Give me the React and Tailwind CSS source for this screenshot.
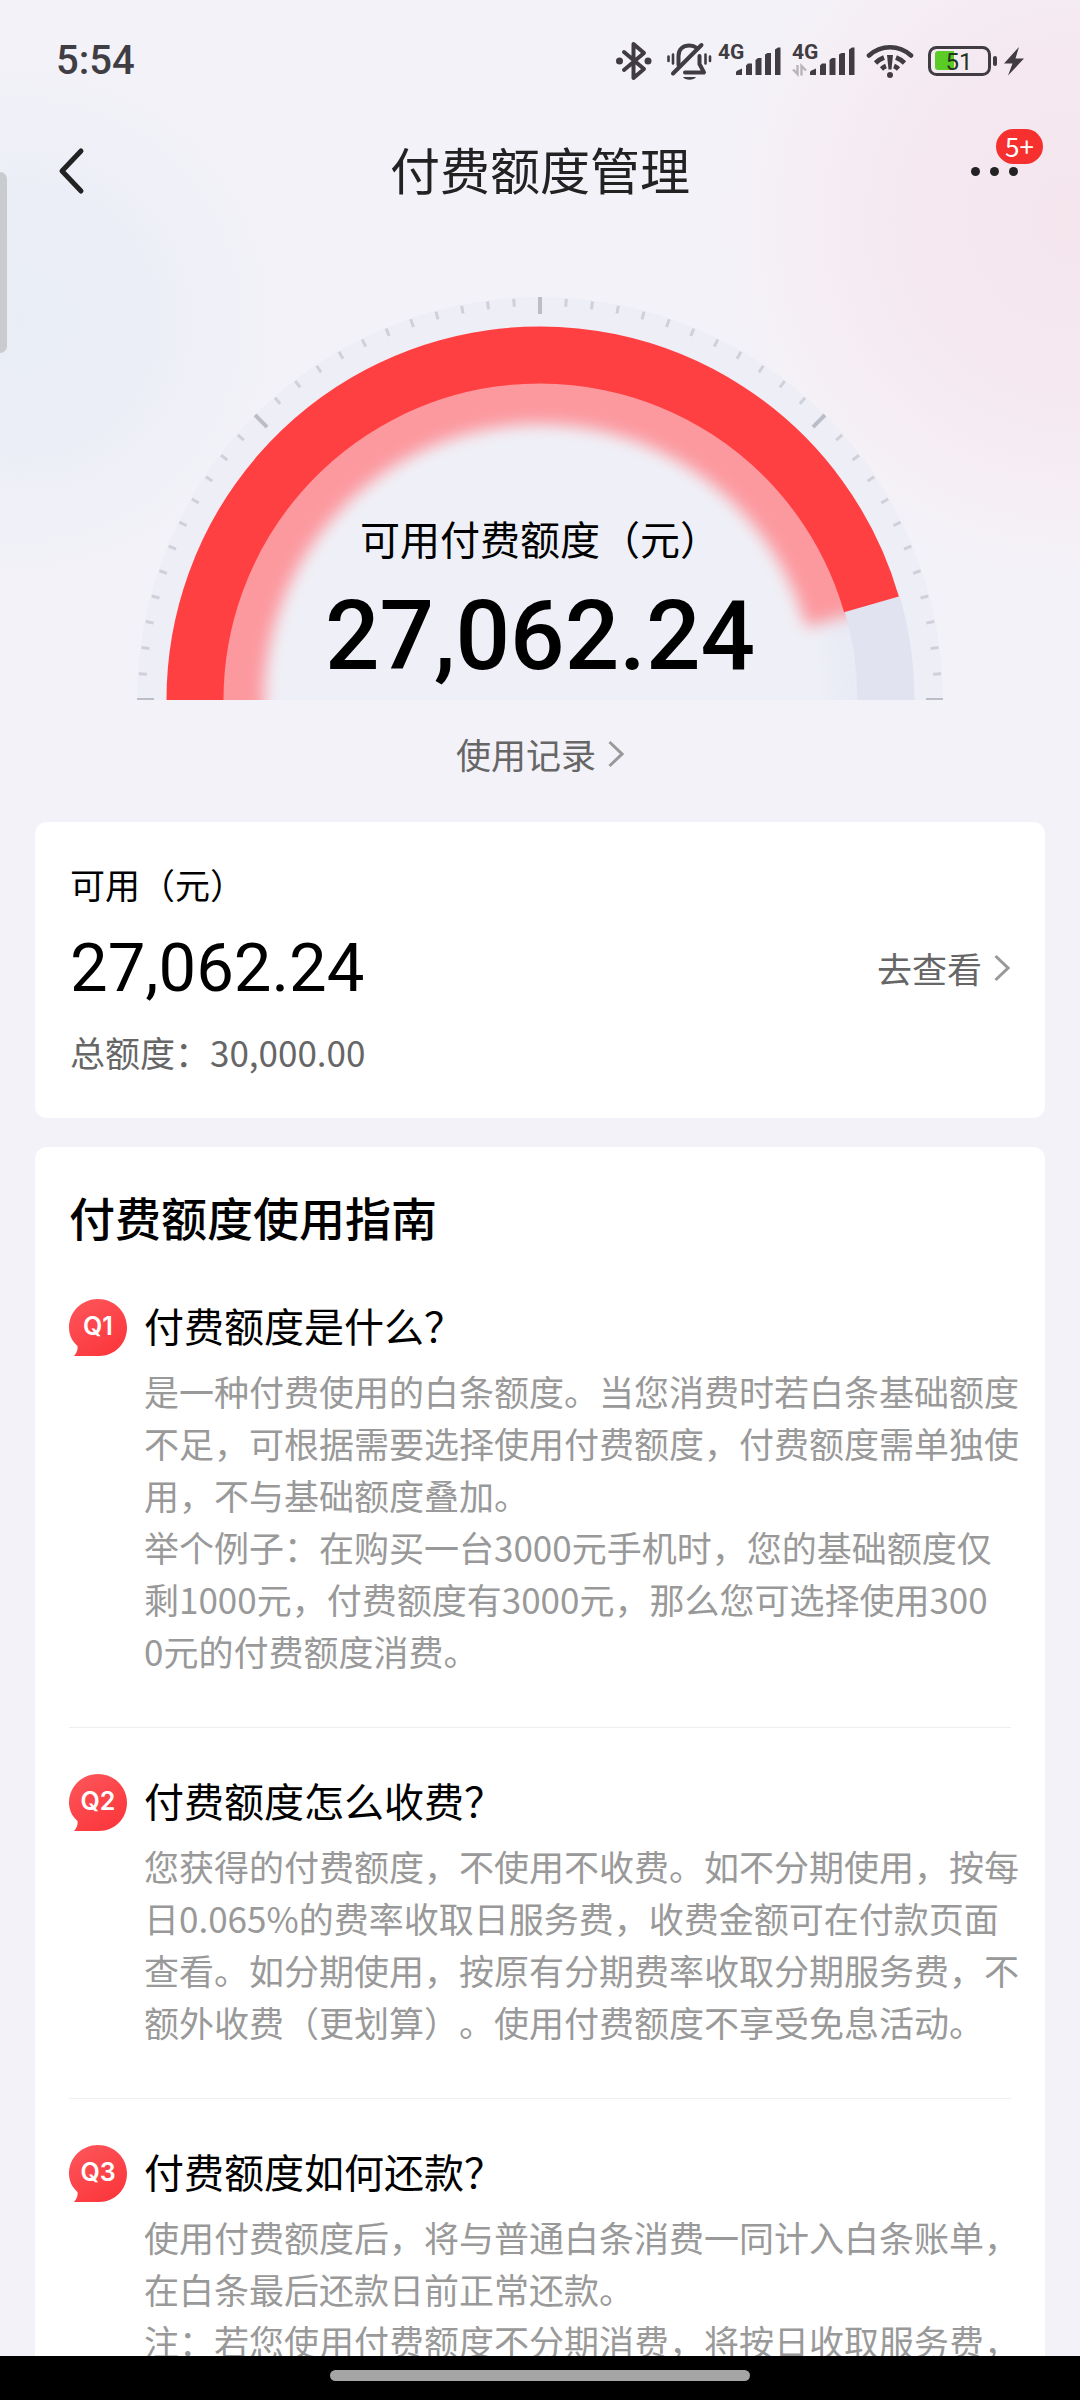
const RED = '#ff4043';
const CX = 403;
const CY = 403;

const polar = (r, deg) => {
  const a = (deg * Math.PI) / 180;
  return [CX - r * Math.cos(a), CY - r * Math.sin(a)];
};

const arc = (r, from, to) => {
  const [x1, y1] = polar(r, from);
  const [x2, y2] = polar(r, to);
  return `M${x1} ${y1}A${r} ${r} 0 0 1 ${x2} ${y2}`;
};

const ticks = Array.from({ length: 49 }, (_, i) => {
  const major = i % 12 === 0;
  const deg = i * 3.75;
  return { major, from: polar(major ? 386 : 394, deg), to: polar(major ? 403 : 402, deg) };
});

function Gauge() {
  return (
    <svg viewBox="0 0 806 403" className="block w-full" aria-hidden="true">
      <defs>
        <filter id="soft" filterUnits="userSpaceOnUse" x="-40" y="-40" width="886" height="560">
          <feGaussianBlur stdDeviation="8" />
        </filter>
        <filter id="softer" filterUnits="userSpaceOnUse" x="-40" y="-40" width="886" height="600">
          <feGaussianBlur stdDeviation="14" />
        </filter>
        <clipPath id="dial">
          <circle cx={CX} cy={CY} r="318" />
        </clipPath>
      </defs>
      <circle cx={CX} cy={CY} r="403" fill="#eeeef7" />
      <circle cx={CX} cy={CY} r="318" fill="#eff0f7" />
      <g clipPath="url(#dial)" fill="none">
        <path d={arc(318, 160, 190)} stroke="#e8eaf5" strokeWidth="50" filter="url(#softer)" />
        <path d={arc(315, -10, 164.6)} stroke="#fc999f" strokeWidth="78" filter="url(#soft)" />
      </g>
      <path d={arc(346, 163, 180)} fill="none" stroke="#e1e3f1" strokeWidth="57" />
      <path d={arc(345, 0, 163.9)} fill="none" stroke={RED} strokeWidth="57" />
      {ticks.map((t, i) => (
        <line
          key={i}
          x1={t.from[0]}
          y1={t.from[1]}
          x2={t.to[0]}
          y2={t.to[1]}
          stroke={t.major ? '#bdbdc8' : '#d0d0da'}
          strokeWidth={t.major ? 4 : 3}
        />
      ))}
    </svg>
  );
}

function Bluetooth() {
  return (
    <svg viewBox="0 0 36 40" className="h-10 w-9" fill="none" stroke="#403c42" strokeWidth="4" strokeLinejoin="round" strokeLinecap="round">
      <path d="M8 11L28 28L17.500 37V3L28 12L8 29" />
      <circle cx="3.500" cy="20" r="3.500" fill="#403c42" stroke="none" />
      <circle cx="32" cy="20" r="3.500" fill="#403c42" stroke="none" />
    </svg>
  );
}

function MutedBell() {
  return (
    <svg viewBox="0 0 46 40" className="h-10 w-[46px]" fill="none" stroke="#403c42" strokeWidth="4" strokeLinecap="round">
      <path d="M12.500 24V15C12.500 8 17 4.500 23.500 4.500C26.500 4.500 29 5.500 31 7" />
      <path d="M33.500 15V23L38 31.500H19" strokeLinejoin="round" />
      <path d="M35.500 4L7 32.500" />
      <path d="M17 36H30C28 39.500 19 39.500 17 36Z" fill="#403c42" stroke="none" />
      <path d="M7 13.500V22.500M2.500 15.500V20M39.500 13.500V22.500M44 15.500V20" strokeWidth="2.600" />
    </svg>
  );
}

function Signal({ data }) {
  return (
    <svg viewBox="0 0 64 40" className="h-10 w-16" fill="#403c42">
      <text x="0" y="18" fontSize="21" fontWeight="700" fontFamily="Roboto, sans-serif">4G</text>
      <path d="M18 34V31.500Q18 30 19.500 29.500L24 27.500V34ZM28 34V24.500L30 22.500H34V34ZM37.500 34V19L40 17H43.500V34ZM47 34V13.500L49.500 12H53V34ZM57 34V8.500L60 6.500H62.500V34Z" />
      {data && (
        <path d="M5.500 24V33L1 28.500M9.500 34.500V25L14 29.500" fill="none" stroke="#b9b3ba" strokeWidth="2.400" />
      )}
    </svg>
  );
}

function Wifi() {
  return (
    <svg viewBox="0 0 48 40" className="h-10 w-12" fill="none" stroke="#403c42" strokeWidth="4.600">
      <path d="M3 14.500C15 3.500 33 3.500 45 14.500" strokeLinecap="round" />
      <path d="M9.500 22Q13 18.500 18 16.500M30 16.500Q35 18.500 38.500 22" />
      <path d="M15.500 28Q17.500 26 20 25M28 25Q30.500 26 32.500 28" />
      <path d="M21 14H27L25.500 28.500H22.500Z" fill="#403c42" stroke="none" />
      <circle cx="24" cy="34" r="3" fill="#403c42" stroke="none" />
    </svg>
  );
}

function Battery() {
  return (
    <svg viewBox="0 0 70 40" className="h-10 w-[70px]">
      <rect x="1.500" y="6.500" width="60" height="27" rx="7" fill="none" stroke="#403c42" strokeWidth="3" />
      <path d="M10 10H26V29H10Q7 29 7 26V13Q7 10 10 10Z" fill="#5bcb25" />
      <rect x="65" y="15" width="4" height="10" rx="2" fill="#403c42" />
      <text x="31" y="29" textAnchor="middle" fontSize="24" fontFamily="Roboto, sans-serif" fontWeight="400" fill="#24351f">51</text>
    </svg>
  );
}

function Bolt() {
  return (
    <svg viewBox="0 0 22 40" className="h-10 w-[22px]" fill="#403c42">
      <path d="M16 6L1 22.500H9.500L5 34.500L21 17.500H12.500Z" />
    </svg>
  );
}

function Chevron() {
  return (
    <svg viewBox="0 0 16 28" className="h-7 w-4 shrink-0" fill="none" stroke="#999" strokeWidth="3" aria-hidden="true">
      <path d="M1.500 2L14 14L1.500 26" />
    </svg>
  );
}

function QBadge({ label }) {
  return (
    <span className="relative mt-0.5 flex h-[57px] w-[58px] shrink-0 items-center justify-center">
      <svg viewBox="0 0 58 57" className="absolute inset-0" aria-hidden="true">
        <defs>
          <linearGradient id={label} x1="0.200" y1="0" x2="0.800" y2="1">
            <stop offset="0" stopColor="#fd5459" />
            <stop offset="1" stopColor="#fb363b" />
          </linearGradient>
        </defs>
        <path d="M29 0C45 0 58 12.500 58 28.500S46 57 30 57H5C8 54 9 50 8.500 47C3 42 0 36 0 28.500C0 12.500 13 0 29 0Z" fill={`url(#${label})`} />
      </svg>
      <span className="relative pb-1 font-[Inter] text-[25px] leading-7 font-semibold text-white">{label}</span>
    </span>
  );
}

const guide = [
  {
    id: 'Q1',
    title: '付费额度是什么？',
    lines: [
      '是一种付费使用的白条额度。当您消费时若白条基础额度',
      '不足，可根据需要选择使用付费额度，付费额度需单独使',
      '用，不与基础额度叠加。',
      '举个例子：在购买一台3000元手机时，您的基础额度仅',
      '剩1000元，付费额度有3000元，那么您可选择使用300',
      '0元的付费额度消费。',
    ],
  },
  {
    id: 'Q2',
    title: '付费额度怎么收费？',
    lines: [
      '您获得的付费额度，不使用不收费。如不分期使用，按每',
      '日0.065%的费率收取日服务费，收费金额可在付款页面',
      '查看。如分期使用，按原有分期费率收取分期服务费，不',
      '额外收费（更划算）。使用付费额度不享受免息活动。',
    ],
  },
  {
    id: 'Q3',
    title: '付费额度如何还款？',
    lines: [
      '使用付费额度后，将与普通白条消费一同计入白条账单，',
      '在白条最后还款日前正常还款。',
      '注：若您使用付费额度不分期消费，将按日收取服务费，',
    ],
  },
];

export default function App() {
  return (
    <div className="relative flex h-screen flex-col overflow-hidden bg-[#f3f2f8] bg-[radial-gradient(circle_at_20px_320px,#e9edf6_0px,#eceef7_130px,transparent_270px),radial-gradient(circle_at_100%_220px,#f5e6ee_0px,#f5e8f0_170px,#f5eff5_290px,transparent_360px)] font-['Noto_Sans_CJK_SC',sans-serif] text-black [text-spacing-trim:space-all]">
      <div className="absolute top-[172px] left-0 h-[181px] w-[7px] rounded-r-full bg-[#c9cbcf]" />

      <div className="flex h-[122px] shrink-0 items-center justify-between pr-[55px] pl-14">
        <span className="font-[Roboto] text-[40px] leading-none font-medium text-[#403e44]">5:54</span>
        <div className="flex items-center">
          <Bluetooth />
          <span className="ml-3.5"><MutedBell /></span>
          <span className="ml-1.5"><Signal /></span>
          <span className="ml-2.5"><Signal data /></span>
          <span className="ml-2.5"><Wifi /></span>
          <span className="ml-3.5"><Battery /></span>
          <span className="ml-[5px]"><Bolt /></span>
        </div>
      </div>

      <header className="grid h-[98px] shrink-0 grid-cols-[1fr_auto_1fr] items-center px-14">
        <button type="button" aria-label="返回" className="justify-self-start">
          <svg viewBox="0 0 30 48" className="h-12 w-[30px]" fill="none" stroke="#222" strokeWidth="5" strokeLinecap="round" strokeLinejoin="round">
            <path d="M25 4L6 24L25 44" />
          </svg>
        </button>
        <h1 className="pb-1.5 text-[50px] leading-[72px] text-[#222]">付费额度管理</h1>
        <button type="button" aria-label="更多" className="relative flex items-center gap-2.5 justify-self-end pr-1.5">
          <span className="size-[9px] rounded-full bg-[#222]" />
          <span className="size-[9px] rounded-full bg-[#222]" />
          <span className="size-[9px] rounded-full bg-[#222]" />
          <span className="absolute -right-[19px] bottom-3 flex h-[35px] w-[47px] items-center justify-center rounded-full bg-[#f5302f] text-[26px] leading-none text-white">5+</span>
        </button>
      </header>

      <main className="flex min-h-0 flex-1 flex-col overflow-hidden px-[35px] pt-[77px]">
        <section className="flex shrink-0 flex-col items-center">
          <div className="relative w-[806px] max-w-full">
            <Gauge />
            <div className="absolute inset-x-0 bottom-0 flex flex-col items-center">
              <p className="text-[40px] leading-[56px]">可用付费额度（元）</p>
              <p className="mt-1.5 font-[Roboto] text-[96px] leading-[128px] font-medium">27,062.24</p>
            </div>
          </div>
          <a href="#records" className="mt-[30px] flex items-center gap-3 text-[35px] leading-[48px] text-[#666]">
            使用记录
            <Chevron />
          </a>
        </section>

        <section className="mt-11 flex shrink-0 items-center justify-between rounded-xl bg-white px-[35px] pt-[38px] pb-[42px]">
          <div>
            <p className="text-[35px] leading-[48px]">可用（元）</p>
            <p className="mt-5 font-[Roboto] text-[67px] leading-[80px]">27,062.24</p>
            <p className="mt-5 text-[35px] leading-[48px] text-[#666]">总额度：30,000.00</p>
          </div>
          <a href="#detail" className="flex items-center gap-3 text-[35px] leading-[48px] text-[#666]">
            去查看
            <Chevron />
          </a>
        </section>

        <section className="mt-[29px] shrink-0 rounded-t-xl bg-white px-[34px] pt-10">
          <h2 className="mb-2 text-[46px] leading-[58px] font-medium">付费额度使用指南</h2>
          {guide.map((item) => (
            <article key={item.id} className="flex items-start gap-[17px] border-b border-[#eee] pt-11 pb-[50px]">
              <QBadge label={item.id} />
              <div className="min-w-0 flex-1">
                <h3 className="text-[40px] leading-[56px]">{item.title}</h3>
                <p className="mt-3 text-[35px] leading-[52px] whitespace-pre text-[#999]">{item.lines.join('\n')}</p>
              </div>
            </article>
          ))}
        </section>
      </main>

      <footer className="z-10 flex h-11 shrink-0 items-center justify-center bg-black pb-1.5">
        <span className="h-[11px] w-[420px] rounded-full bg-[#a5a5a5]" />
      </footer>
    </div>
  );
}
